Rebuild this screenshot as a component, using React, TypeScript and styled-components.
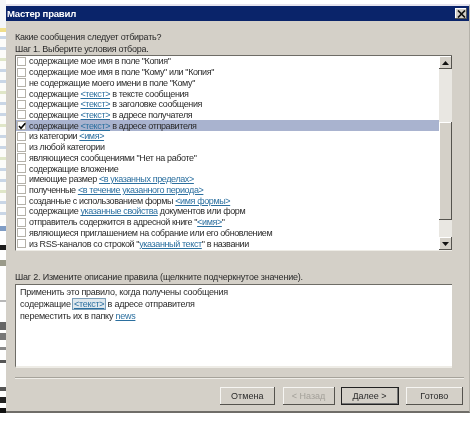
import React from "react";
import styled, {createGlobalStyle} from "styled-components";

const GlobalStyle = createGlobalStyle`
    html, body {
        margin: 0;
        padding: 0;
        background: #fff;
    }
    body {
        font-family: "Liberation Sans", sans-serif;
    }
`;

type Rule = { before: string; link?: string; after?: string };

const rules: Rule[] = [
    {before: 'содержащие мое имя в поле "Копия"'},
    {before: 'содержащие мое имя в поле "Кому" или "Копия"'},
    {before: 'не содержащие моего имени в поле "Кому"'},
    {before: "содержащие ", link: "<текст>", after: " в тексте сообщения"},
    {before: "содержащие ", link: "<текст>", after: " в заголовке сообщения"},
    {before: "содержащие ", link: "<текст>", after: " в адресе получателя"},
    {before: "содержащие ", link: "<текст>", after: " в адресе отправителя"},
    {before: "из категории ", link: "<имя>"},
    {before: "из любой категории"},
    {before: 'являющиеся сообщениями "Нет на работе"'},
    {before: "содержащие вложение"},
    {before: "имеющие размер ", link: "<в указанных пределах>"},
    {before: "полученные ", link: "<в течение указанного периода>"},
    {before: "созданные с использованием формы ", link: "<имя формы>"},
    {before: "содержащие ", link: "указанные свойства", after: " документов или форм"},
    {before: 'отправитель содержится в адресной книге "', link: "<имя>", after: '"'},
    {before: "являющиеся приглашением на собрание или его обновлением"},
    {before: 'из RSS-каналов со строкой "', link: "указанный текст", after: '" в названии'},
];

const SELECTED = 6;

// кусок окна позади диалога, виден слева узкой полосой
const tickColors = ["#c9d6e6", "#c9d6e6", "#dfe6c8"];
const stripMarks = [
    {h: 28, c: "#f4f6f8"}, {h: 4, c: "#f0df8c"}, {h: 4, c: "#ffffff"},
    ...Array.from({length: 17}).flatMap((_, i) => [
        {h: 3, c: tickColors[i % 3]},
        {h: 8, c: "#fcfcfa"},
    ]),
    {h: 3, c: "#ffffff"}, {h: 5, c: "#7f9cc4"}, {h: 14, c: "#ffffff"}, {h: 5, c: "#1c1c1c"},
    {h: 10, c: "#ffffff"}, {h: 6, c: "#9a9a8a"}, {h: 34, c: "#ffffff"}, {h: 2, c: "#b8b8b8"},
    {h: 20, c: "#ffffff"}, {h: 8, c: "#666666"}, {h: 3, c: "#ffffff"}, {h: 7, c: "#777777"},
    {h: 7, c: "#ffffff"}, {h: 3, c: "#888888"}, {h: 10, c: "#ffffff"}, {h: 3, c: "#555555"},
    {h: 24, c: "#ffffff"}, {h: 4, c: "#555555"}, {h: 6, c: "#ffffff"}, {h: 6, c: "#222222"},
    {h: 5, c: "#ffffff"}, {h: 5, c: "#111111"},
];

const App: React.FC = () => (
    <Screen>
        <GlobalStyle/>
        <BackStrip>
            {stripMarks.map((m, i) => <StripMark key={i} $h={m.h} $c={m.c}/>)}
        </BackStrip>
        <Dialog>
            <TitleBar>
                <TitleText>Мастер правил</TitleText>
                <CloseButton>
                    <svg width="9" height="8" viewBox="0 0 9 8">
                        <path d="M1 0.5 L8 7.5 M8 0.5 L1 7.5" stroke="#111" strokeWidth="1.7"/>
                    </svg>
                </CloseButton>
            </TitleBar>
            <Body>
                <Question>Какие сообщения следует отбирать?</Question>
                <StepLabel>Шаг 1. Выберите условия отбора.</StepLabel>
                <ListFrame>
                    <RuleList>
                        {rules.map((r, i) => (
                            <RuleRow key={i} $selected={i === SELECTED}>
                                <Check>
                                    {i === SELECTED && (
                                        <svg width="8" height="8" viewBox="0 0 8 8">
                                            <path d="M1 4 L3 6.3 L7.3 1.2" fill="none" stroke="#000" strokeWidth="1.6"/>
                                        </svg>
                                    )}
                                </Check>
                                <RuleText>
                                    {r.before}
                                    {r.link && <RuleLink>{r.link}</RuleLink>}
                                    {r.after}
                                </RuleText>
                            </RuleRow>
                        ))}
                    </RuleList>
                    <ScrollBar>
                        <ScrollButton>
                            <svg width="7" height="4" viewBox="0 0 7 4"><path d="M3.5 0 L7 4 L0 4 Z" fill="#111"/></svg>
                        </ScrollButton>
                        <ScrollGap $h={53}/>
                        <ScrollThumb/>
                        <ScrollGap $h={17}/>
                        <ScrollButton>
                            <svg width="7" height="4" viewBox="0 0 7 4"><path d="M0 0 L7 0 L3.5 4 Z" fill="#111"/></svg>
                        </ScrollButton>
                    </ScrollBar>
                </ListFrame>
                <StepTwoLabel>Шаг 2. Измените описание правила (щелкните подчеркнутое значение).</StepTwoLabel>
                <DescriptionBox>
                    <DescLine>Применить это правило, когда получены сообщения</DescLine>
                    <DescLine>содержащие <FocusLink>&lt;текст&gt;</FocusLink> в адресе отправителя</DescLine>
                    <DescLine>переместить их в папку <RuleLink>news</RuleLink></DescLine>
                </DescriptionBox>
                <Divider/>
                <ButtonRow>
                    <WizardButton $w={55}>Отмена</WizardButton>
                    <ButtonPair>
                        <WizardButton $w={52} disabled>&lt; Назад</WizardButton>
                        <WizardButton $w={58} $primary>Далее &gt;</WizardButton>
                    </ButtonPair>
                    <WizardButton $w={58}>Готово</WizardButton>
                </ButtonRow>
            </Body>
        </Dialog>
    </Screen>
);

const Screen = styled.div`
    width: 474px;
    height: 428px;
    display: flex;
    align-items: flex-start;
    overflow: hidden;
    background: #fff;
    filter: blur(0.35px);
`;

const BackStrip = styled.div`
    width: 6px;
    flex: none;
    display: flex;
    flex-direction: column;
`;

const StripMark = styled.div<{ $h: number; $c: string }>`
    height: ${p => p.$h}px;
    flex: none;
    background: ${p => p.$c};
`;

const Dialog = styled.div`
    width: 464px;
    height: 409px;
    margin-top: 4px;
    padding-top: 2px;
    box-sizing: border-box;
    background: #d4d0c8;
    border-top: 2px solid #e6e4ee;
    border-bottom: 2px solid #6f6d68;
    border-right: 1px solid #b5b2aa;
    display: flex;
    flex-direction: column;
`;

const TitleBar = styled.div`
    height: 15px;
    flex: none;
    margin-top: -2px;
    background: #0a246a;
    display: flex;
    align-items: center;
    justify-content: space-between;
    padding: 0 2px 0 1px;
`;

const TitleText = styled.span`
    font: bold 9.6px "Liberation Sans", sans-serif;
    letter-spacing: -0.25px;
    color: #fff;
`;

const CloseButton = styled.div`
    width: 12px;
    height: 11px;
    background: #d4d0c8;
    box-shadow: inset -1px -1px 0 #555, inset 1px 1px 0 #fff;
    display: flex;
    align-items: center;
    justify-content: center;
`;

const Body = styled.div`
    flex: 1;
    display: flex;
    flex-direction: column;
    padding: 0 6px 0 9px;
    color: #2a2a2a;
    font: 9px/12px "Liberation Sans", sans-serif;
    letter-spacing: -0.25px;
`;

const Question = styled.div`
    margin-top: 10px;
    height: 12px;
`;

const StepLabel = styled.div`
    height: 12px;
`;

const ListFrame = styled.div`
    width: 437px;
    height: 196px;
    box-sizing: border-box;
    background: #fff;
    border-top: 1px solid #6e6c66;
    border-left: 1px solid #6e6c66;
    border-bottom: 1px solid #eeece6;
    display: flex;
`;

const RuleList = styled.div`
    flex: 1;
    min-width: 0;
    display: flex;
    flex-direction: column;
`;

const RuleRow = styled.div<{ $selected: boolean }>`
    height: 10.73px;
    flex: none;
    display: flex;
    align-items: center;
    gap: 3px;
    padding-left: 1px;
    background: ${p => (p.$selected ? "#a9b3cf" : "transparent")};
`;

const Check = styled.div`
    width: 9px;
    height: 9px;
    flex: none;
    background: #fff;
    box-shadow: inset 0 0 0 1px #b4b1a9;
    display: flex;
    align-items: center;
    justify-content: center;
`;

const RuleText = styled.span`
    white-space: nowrap;
    line-height: 10px;
    letter-spacing: -0.38px;
`;

const RuleLink = styled.span`
    color: #2b6f9f;
    text-decoration: underline;
`;

const ScrollBar = styled.div`
    width: 13px;
    flex: none;
    display: flex;
    flex-direction: column;
    background: #e9e7e2;
`;

const ScrollButton = styled.div`
    width: 13px;
    height: 13px;
    flex: none;
    box-sizing: border-box;
    background: #d4d0c8;
    box-shadow: inset -1px -1px 0 #55534e, inset 1px 1px 0 #fff;
    display: flex;
    align-items: center;
    justify-content: center;
`;

const ScrollGap = styled.div<{ $h: number }>`
    height: ${p => p.$h}px;
    flex: none;
`;

const ScrollThumb = styled.div`
    height: 98px;
    flex: none;
    background: #d4d0c8;
    box-shadow: inset -1px -1px 0 #55534e, inset 1px 1px 0 #fff;
`;

const StepTwoLabel = styled.div`
    margin-top: 20px;
    height: 12px;
    white-space: nowrap;
    letter-spacing: -0.2px;
`;

const DescriptionBox = styled.div`
    width: 437px;
    height: 84px;
    margin-top: 1px;
    box-sizing: border-box;
    padding: 1px 4px;
    background: #fff;
    border-top: 1px solid #6e6c66;
    border-left: 1px solid #6e6c66;
    border-bottom: 2px solid #eeece6;
`;

const DescLine = styled.div`
    height: 12px;
    line-height: 12px;
    white-space: nowrap;
`;

const FocusLink = styled.span`
    color: #2b6f9f;
    text-decoration: underline;
    background: #dfe8ee;
    outline: 1px solid #7d9fb8;
    padding: 0 1px;
`;

const Divider = styled.div`
    width: 449px;
    height: 1px;
    margin-top: 9px;
    background: #a6a39b;
    border-bottom: 1px solid #efede8;
`;

const ButtonRow = styled.div`
    margin-top: 8px;
    margin-left: 205px;
    display: flex;
    gap: 7px;
`;

const ButtonPair = styled.div`
    display: flex;
    gap: 6px;
    margin-left: 1px;
`;

const WizardButton = styled.button<{ $w: number; $primary?: boolean }>`
    width: ${p => p.$w}px;
    height: 18px;
    padding: 0;
    border: none;
    background: #d4d0c8;
    font: 9px "Liberation Sans", sans-serif;
    color: #2a2a2a;
    box-shadow: ${p => (p.$primary
        ? "inset 0 0 0 1px #222, inset -1px -1px 0 1px #777"
        : "inset -1px -1px 0 #55534e, inset 1px 1px 0 #f6f5f2")};

    &:disabled {
        color: #a3a099;
    }
`;

export default App;
